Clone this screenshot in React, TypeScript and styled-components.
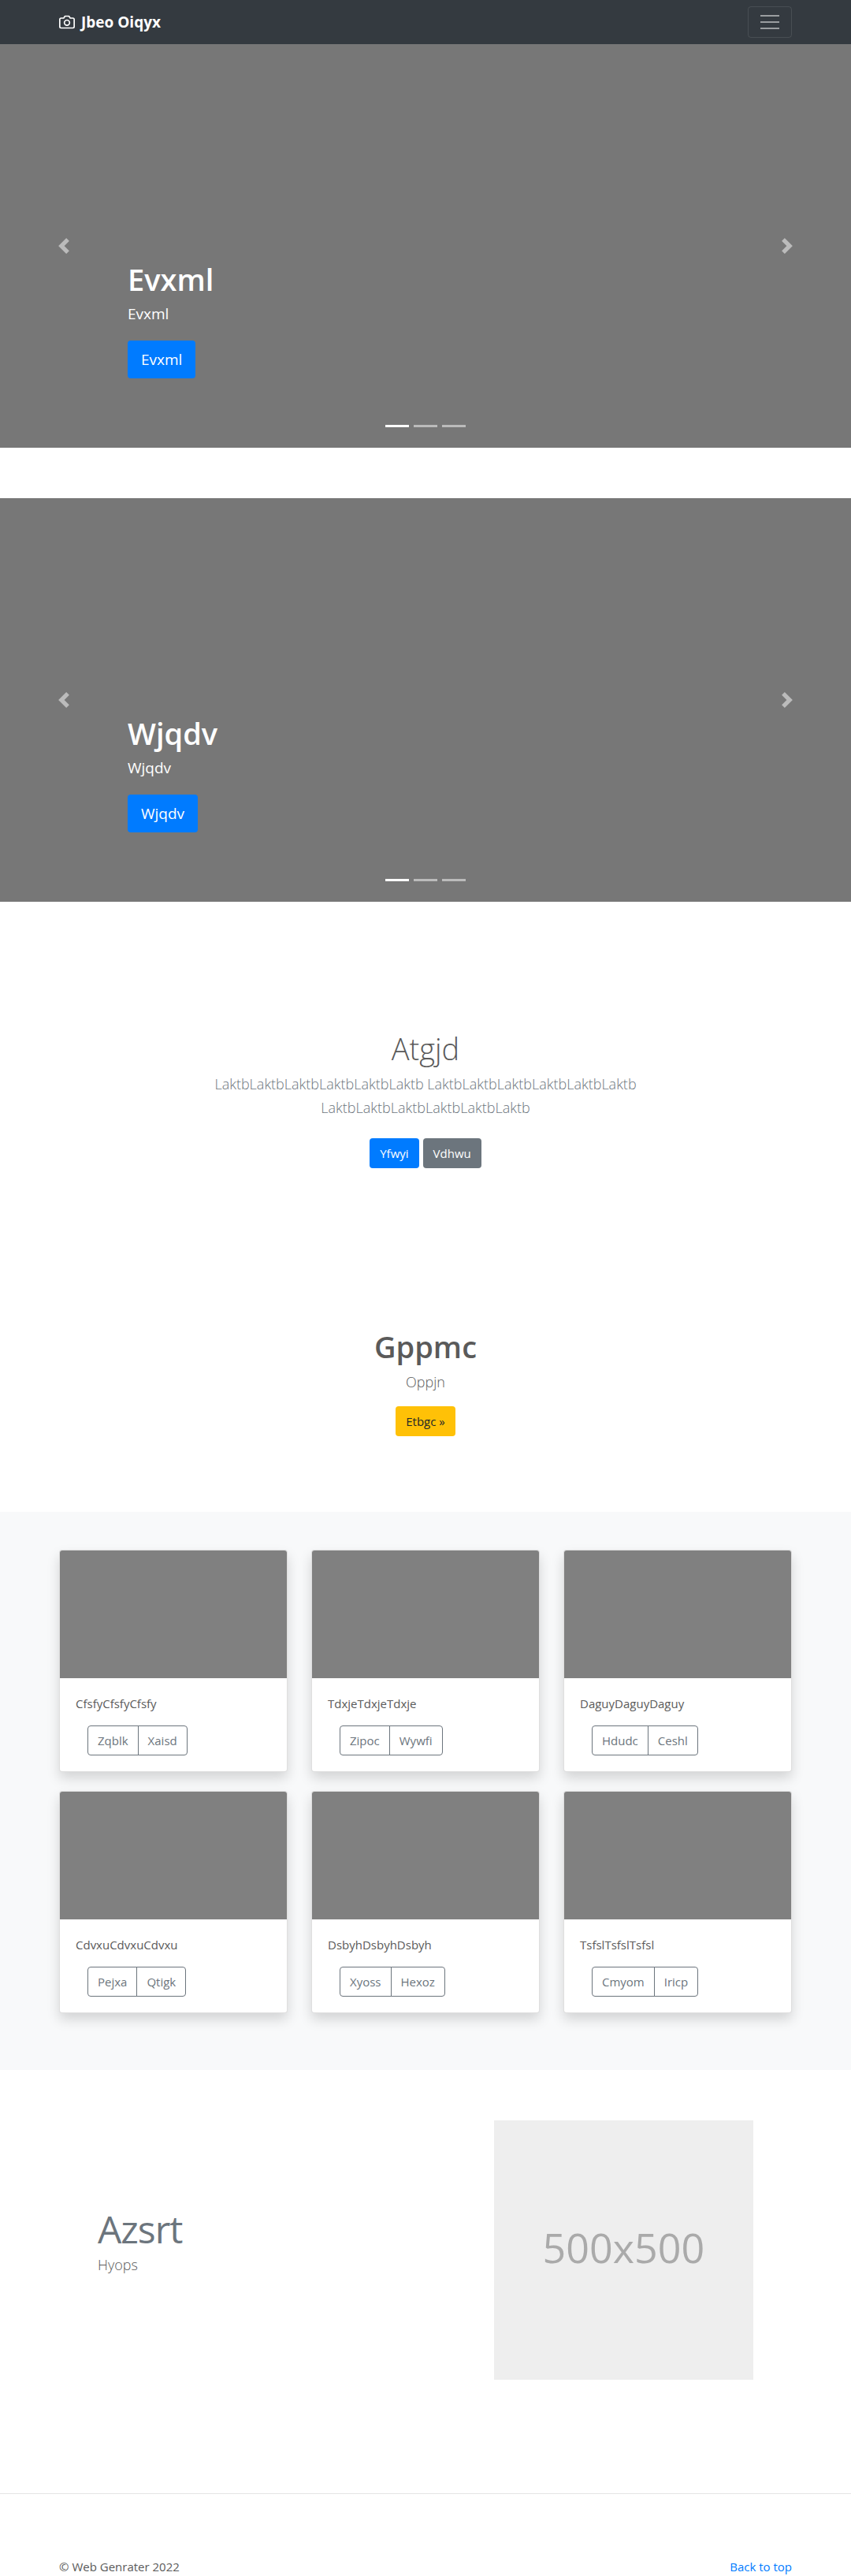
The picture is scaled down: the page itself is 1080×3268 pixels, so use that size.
import React from "react";
import styled, { createGlobalStyle } from "styled-components";

const GlobalStyle = createGlobalStyle`
  *, *::before, *::after { box-sizing: border-box; }
  body {
    margin: 0;
    background: #fff;
    color: #5a5a5a;
    font-family: "Segoe UI", "Open Sans", "Noto Sans", sans-serif;
    font-size: 15px;
    line-height: 24px;
  }
  h1, h2, p { margin: 0; }
  a { text-decoration: none; }
`;

const Container = styled.div<{ $narrow?: boolean }>`
  width: 100%;
  max-width: ${(p) => (p.$narrow ? 640 : 960)}px;
  margin: 0 auto;
  padding: 0 15px;
`;

const Navbar = styled.header`
  background: #343a40;
  padding: 8px 0;
`;

const NavRow = styled(Container)`
  display: flex;
  align-items: center;
  justify-content: space-between;
`;

const Brand = styled.a`
  display: flex;
  align-items: center;
  gap: 8px;
  color: #fff;
  font-size: 19px;
  font-weight: 700;
  line-height: 30px;
`;

const Toggler = styled.button`
  display: flex;
  align-items: center;
  justify-content: center;
  width: 56px;
  height: 40px;
  padding: 0;
  background: transparent;
  border: 1px solid rgba(255, 255, 255, 0.1);
  border-radius: 4px;
`;

const CarouselBox = styled.section`
  position: relative;
  display: flex;
  flex-direction: column;
  justify-content: flex-end;
  height: 512px;
  margin-bottom: 64px;
  padding: 0 15% 88px;
  background: #777;
  color: #fff;
`;

const HeroTitle = styled.h1<{ $light?: boolean }>`
  margin-bottom: 4px;
  font-size: 38px;
  font-weight: ${(p) => (p.$light ? 300 : 600)};
  line-height: 52px;
`;

const CarouselText = styled.p`
  margin-bottom: 20px;
  font-size: 19px;
  line-height: 28px;
`;

const CarouselControl = styled.button<{ $side: "left" | "right" }>`
  position: absolute;
  top: 0;
  bottom: 0;
  ${(p) => p.$side}: 0;
  display: flex;
  align-items: center;
  justify-content: center;
  width: 15%;
  padding: 0;
  background: none;
  border: 0;
  color: #fff;
  opacity: 0.5;
`;

const Indicators = styled.div`
  position: absolute;
  left: 15%;
  right: 15%;
  bottom: 16px;
  display: flex;
  justify-content: center;
  gap: 6px;
`;

const Indicator = styled.button<{ $active: boolean }>`
  width: 30px;
  height: 23px;
  padding: 0;
  background: #fff;
  background-clip: content-box;
  border: solid transparent;
  border-width: 10px 0;
  opacity: ${(p) => (p.$active ? 1 : 0.5)};
`;

const tones = {
  primary: { background: "#007bff", color: "#fff" },
  secondary: { background: "#6c757d", color: "#fff" },
  warning: { background: "#ffc107", color: "#212529" },
};

const LinkButton = styled.a<{ $tone: keyof typeof tones; $large?: boolean }>`
  display: inline-block;
  align-self: flex-start;
  padding: ${(p) => (p.$large ? "10px 17px" : "7px 13px")};
  background: ${(p) => tones[p.$tone].background};
  color: ${(p) => tones[p.$tone].color};
  border-radius: 4px;
  font-size: ${(p) => (p.$large ? 19 : 15)}px;
  line-height: ${(p) => (p.$large ? 28 : 24)}px;
`;

const Jumbotron = styled.section<{ $pad: number }>`
  margin-bottom: 32px;
  padding: ${(p) => p.$pad}px 0;
  text-align: center;
`;

const Lead = styled.p<{ $muted?: boolean }>`
  margin-bottom: 16px;
  color: ${(p) => (p.$muted ? "#6c757d" : "inherit")};
  font-size: 18px;
  font-weight: 300;
  line-height: 30px;
`;

const ButtonRow = styled.div<{ $spaced?: boolean }>`
  display: flex;
  justify-content: center;
  gap: 5px;
  padding: ${(p) => (p.$spaced ? 8 : 0)}px 0;
`;

const Album = styled.section`
  padding: 48px 0 72px;
  background: #f8f9fa;
`;

const CardGrid = styled(Container)`
  display: grid;
  grid-template-columns: repeat(3, minmax(0, 1fr));
  gap: 24px 30px;
`;

const Card = styled.article`
  background: #fff;
  border: 1px solid rgba(0, 0, 0, 0.125);
  border-radius: 4px;
  box-shadow: 0 8px 16px rgba(0, 0, 0, 0.15);
`;

const CardImage = styled.div`
  height: 162px;
  background: #808080;
  border-radius: 3px 3px 0 0;
`;

const CardBody = styled.div`
  padding: 20px;
`;

const CardText = styled.p`
  margin-bottom: 16px;
`;

const ButtonGroup = styled.div`
  display: flex;
  margin-left: 15px;
`;

const OutlineButton = styled.button`
  padding: 6px 12px;
  background: transparent;
  border: 1px solid #6c757d;
  color: #6c757d;
  font-family: inherit;
  font-size: 15px;
  line-height: 24px;
  &:first-child { border-radius: 4px 0 0 4px; }
  &:last-child { margin-left: -1px; border-radius: 0 4px 4px 0; }
`;

const Featurette = styled(Container)`
  display: grid;
  grid-template-columns: 7fr 5fr;
  align-items: start;
  gap: 42px;
  padding: 64px 64px 144px;
`;

const FeatureCopy = styled.div`
  padding-top: 112px;
`;

const FeatureTitle = styled.h2`
  margin-bottom: 4px;
  color: #6c757d;
  font-size: 48px;
  font-weight: 400;
  line-height: 52px;
  letter-spacing: -1px;
`;

const Placeholder = styled.div`
  display: flex;
  align-items: center;
  justify-content: center;
  aspect-ratio: 1;
  padding-bottom: 8px;
  background: #eee;
  color: #aaa;
  font-size: 52px;
  line-height: 64px;
`;

const Footer = styled.footer`
  padding-top: 80px;
  border-top: 1px solid rgba(0, 0, 0, 0.1);
`;

const FooterRow = styled(Container)`
  display: flex;
  justify-content: space-between;
`;

const FooterLink = styled.a`
  color: #007bff;
`;

const CameraIcon = () => (
  <svg width="20" height="20" viewBox="0 0 24 24" fill="none" stroke="currentColor" strokeWidth="2" strokeLinecap="round" strokeLinejoin="round" aria-hidden="true">
    <path d="M23 19a2 2 0 0 1-2 2H3a2 2 0 0 1-2-2V8a2 2 0 0 1 2-2h4l2-3h6l2 3h4a2 2 0 0 1 2 2z" />
    <circle cx="12" cy="13" r="4" />
  </svg>
);

const MenuIcon = () => (
  <svg width="30" height="30" viewBox="0 0 30 30" stroke="rgba(255,255,255,.5)" strokeWidth="2" strokeMiterlimit="10" aria-hidden="true">
    <path d="M3 7h24M3 15h24M3 23h24" />
  </svg>
);

const Chevron = ({ side }: { side: "left" | "right" }) => (
  <svg width="20" height="20" viewBox="0 0 8 8" fill="currentColor" aria-hidden="true">
    {side === "left" ? (
      <path d="M5.25 0l-4 4 4 4 1.500-1.500L4.250 4l2.500-2.500L5.250 0z" />
    ) : (
      <path d="M2.750 0l-1.500 1.500L3.750 4l-2.500 2.500L2.750 8l4-4-4-4z" />
    )}
  </svg>
);

const Carousel = ({ label }: { label: string }) => (
  <CarouselBox aria-label={label}>
    <HeroTitle>{label}</HeroTitle>
    <CarouselText>{label}</CarouselText>
    <LinkButton href="#" $tone="primary" $large>{label}</LinkButton>
    <CarouselControl type="button" $side="left" aria-label="Previous"><Chevron side="left" /></CarouselControl>
    <CarouselControl type="button" $side="right" aria-label="Next"><Chevron side="right" /></CarouselControl>
    <Indicators>
      {[0, 1, 2].map((i) => (
        <Indicator key={i} type="button" $active={i === 0} aria-label={`Slide ${i + 1}`} />
      ))}
    </Indicators>
  </CarouselBox>
);

const cards = [
  { text: "CfsfyCfsfyCfsfy", actions: ["Zqblk", "Xaisd"] },
  { text: "TdxjeTdxjeTdxje", actions: ["Zipoc", "Wywfi"] },
  { text: "DaguyDaguyDaguy", actions: ["Hdudc", "Ceshl"] },
  { text: "CdvxuCdvxuCdvxu", actions: ["Pejxa", "Qtigk"] },
  { text: "DsbyhDsbyhDsbyh", actions: ["Xyoss", "Hexoz"] },
  { text: "TsfslTsfslTsfsl", actions: ["Cmyom", "Iricp"] },
];

export default function App() {
  return (
    <>
      <GlobalStyle />
      <Navbar>
        <NavRow as="nav">
          <Brand href="#"><CameraIcon />Jbeo Oiqyx</Brand>
          <Toggler type="button" aria-label="Toggle navigation"><MenuIcon /></Toggler>
        </NavRow>
      </Navbar>
      <main>
        <Carousel label="Evxml" />
        <Carousel label="Wjqdv" />
        <Jumbotron $pad={96}>
          <Container $narrow>
            <HeroTitle $light>Atgjd</HeroTitle>
            <Lead $muted>LaktbLaktbLaktbLaktbLaktbLaktb LaktbLaktbLaktbLaktbLaktbLaktb LaktbLaktbLaktbLaktbLaktbLaktb</Lead>
            <ButtonRow $spaced>
              <LinkButton href="#" $tone="primary">Yfwyi</LinkButton>
              <LinkButton href="#" $tone="secondary">Vdhwu</LinkButton>
            </ButtonRow>
          </Container>
        </Jumbotron>
        <Jumbotron $pad={64}>
          <Container>
            <HeroTitle>Gppmc</HeroTitle>
            <Lead>Oppjn</Lead>
            <ButtonRow>
              <LinkButton href="#" $tone="warning">Etbgc »</LinkButton>
            </ButtonRow>
          </Container>
        </Jumbotron>
        <Album>
          <CardGrid>
            {cards.map((card) => (
              <Card key={card.text}>
                <CardImage />
                <CardBody>
                  <CardText>{card.text}</CardText>
                  <ButtonGroup>
                    {card.actions.map((action) => (
                      <OutlineButton key={action} type="button">{action}</OutlineButton>
                    ))}
                  </ButtonGroup>
                </CardBody>
              </Card>
            ))}
          </CardGrid>
        </Album>
        <Featurette as="section">
          <FeatureCopy>
            <FeatureTitle>Azsrt</FeatureTitle>
            <Lead>Hyops</Lead>
          </FeatureCopy>
          <Placeholder>500x500</Placeholder>
        </Featurette>
      </main>
      <Footer>
        <FooterRow>
          <p>© Web Genrater 2022</p>
          <FooterLink href="#">Back to top</FooterLink>
        </FooterRow>
      </Footer>
    </>
  );
}
